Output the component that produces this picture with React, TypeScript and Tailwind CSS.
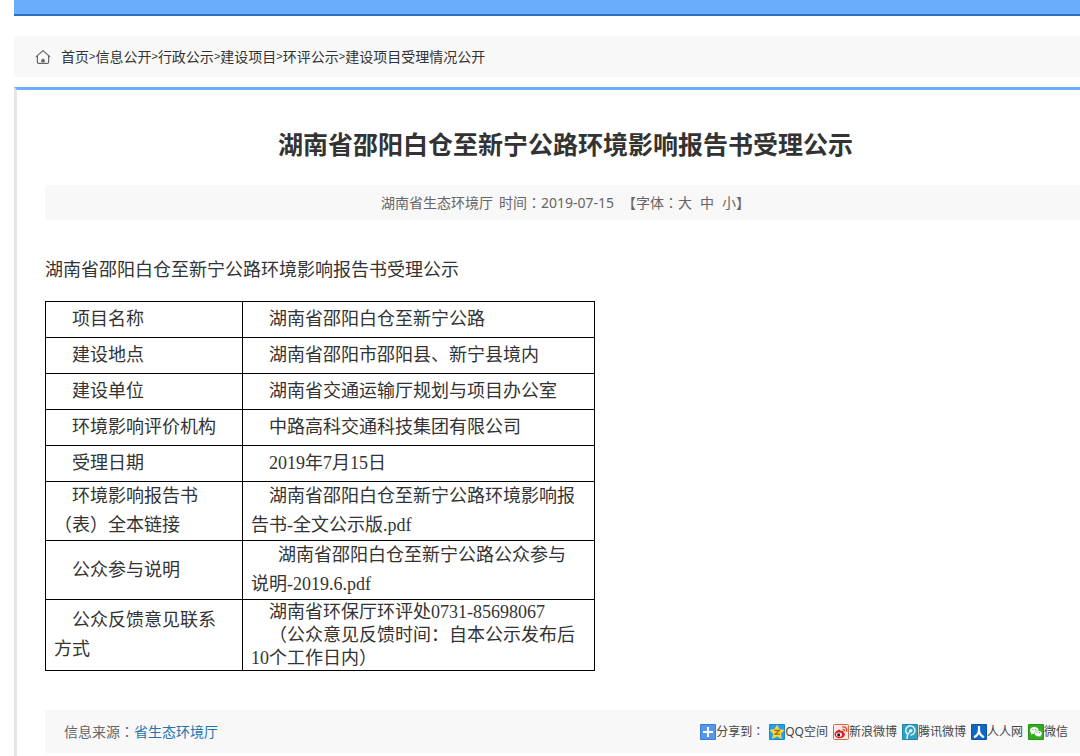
import React from "react";

const crumbs = [
  { title: "首页", href: "#home" },
  { title: "信息公开", href: "#info" },
  { title: "行政公示", href: "#notice" },
  { title: "建设项目", href: "#projects" },
  { title: "环评公示", href: "#eia" },
  { title: "建设项目受理情况公开", href: "#accepted" },
];

const rows = [
  { label: "项目名称", value: "湖南省邵阳白仓至新宁公路" },
  { label: "建设地点", value: "湖南省邵阳市邵阳县、新宁县境内" },
  { label: "建设单位", value: "湖南省交通运输厅规划与项目办公室" },
  { label: "环境影响评价机构", value: "中路高科交通科技集团有限公司" },
  { label: "受理日期", value: "2019年7月15日" },
];

const HomeIcon = () => (
  <svg viewBox="0 0 16 16" className="h-4 w-4" fill="none" stroke="#666" strokeWidth="1.2">
    <path d="M1.2 7.6 8 1.6l6.8 6" strokeLinecap="round" strokeLinejoin="round" />
    <path d="M2.4 6.8v6.4c0 .7.4 1.1 1.1 1.1h9c.7 0 1.1-.4 1.1-1.1V6.8" />
    <path d="M6.5 13v-1.600a1.500 1.500 0 0 1 3 0V13z" fill="#666" strokeWidth=".6" />
  </svg>
);

const ShareIcon = () => (
  <svg viewBox="0 0 16 16" className="h-4 w-4">
    <rect width="16" height="16" rx="1" fill="#3a7fd5" />
    <rect x="1" y="1" width="14" height="14" fill="#5598ea" />
    <path d="M8 3v10M3 8h10" stroke="#fff" strokeWidth="2" />
  </svg>
);

const QzoneIcon = () => (
  <svg viewBox="0 0 16 16" className="h-4 w-4">
    <rect width="16" height="16" rx="1" fill="#1686d9" />
    <rect x="1" y="1" width="14" height="14" fill="#23a0ee" />
    <path
      d="m8 .6 2.400 4.500 5.200.8-3.700 3.800 1 5.200L8 12.500l-4.900 2.400 1-5.200L.4 5.900l5.200-.8z"
      fill="#fdd835"
    />
    <path d="M5.300 6.300h5.200L6 10.200h5" fill="none" stroke="#a56a10" strokeWidth="1.2" />
  </svg>
);

const SinaIcon = () => (
  <svg viewBox="0 0 16 16" className="h-4 w-4">
    <rect x=".5" y=".5" width="15" height="15" rx="1" fill="#f8e9e4" stroke="#d9694c" />
    <path
      d="M1.500 10.300c0-2.300 3.300-5 5.200-4.600.9.200.9 1 .7 1.500 1.500-.7 3.500-.5 3 1.200 3.200 1.200 1.300 5.800-3.900 5.800-2.800 0-5-1.500-5-3.900z"
      fill="#d8232a"
    />
    <ellipse cx="6" cy="10.700" rx="2.900" ry="2.100" fill="#fff" />
    <circle cx="5.700" cy="10.900" r="1.600" fill="#222" />
    <path d="M9.200 3c3.400-.5 5.200 1.700 4.400 4.700M9.500 5.400c1.500-.2 2.300.7 2 2" fill="none" stroke="#e0482a" strokeWidth="1.4" />
  </svg>
);

const TencentIcon = () => (
  <svg viewBox="0 0 16 16" className="h-4 w-4">
    <rect width="16" height="16" rx="1" fill="#1b86ab" />
    <rect x="1" y="1" width="14" height="14" fill="#329fc3" />
    <path
      d="M4.800 9.400A4.600 4.600 0 1 1 9.200 11M5 14.500c.2-3.300 1-5.700 3.500-7.500"
      fill="none"
      stroke="#e5f6fb"
      strokeWidth="1.5"
      strokeLinecap="round"
    />
    <circle cx="8.800" cy="6.700" r="1.700" fill="#e5f6fb" />
  </svg>
);

const RenrenIcon = () => (
  <svg viewBox="0 0 16 16" className="h-4 w-4">
    <rect width="16" height="16" rx="1" fill="#0a55a5" />
    <rect x="1" y="1" width="14" height="14" fill="#1068c4" />
    <path d="M8 2v3.500c0 3.400-1.700 6-4.900 7.800M8 5.500c0 3.400 1.700 6 4.900 7.800" fill="none" stroke="#fff" strokeWidth="2.2" />
  </svg>
);

const WechatIcon = () => (
  <svg viewBox="0 0 16 16" className="h-4 w-4">
    <rect width="16" height="16" rx="1" fill="#259417" />
    <rect x="1" y="1" width="14" height="14" fill="#36aa22" />
    <path d="M6.300 3C3.800 3 2 4.500 2 6.500c0 1.100.6 2 1.500 2.700L3 10.700l1.800-.9c2.800.7 5.800-.7 5.800-3.300C10.600 4.500 8.800 3 6.300 3z" fill="#fff" />
    <path d="M10.300 6.500c-2.200 0-3.900 1.300-3.900 3.100 0 2.200 2.600 3.500 5 2.900l1.500.8-.4-1.300c.8-.6 1.500-1.400 1.500-2.400 0-1.800-1.600-3.100-3.700-3.100z" fill="#fff" stroke="#36aa22" strokeWidth=".5" />
    <path d="M4.300 5.600h1M7 5.600h1M8.500 8.800h1M11 8.800h1" stroke="#36aa22" strokeWidth="1" />
  </svg>
);

const shares = [
  { title: "QQ空间", icon: QzoneIcon },
  { title: "新浪微博", icon: SinaIcon },
  { title: "腾讯微博", icon: TencentIcon },
  { title: "人人网", icon: RenrenIcon },
  { title: "微信", icon: WechatIcon },
];

// full-width colon centred in its cell
const Colon = () => (
  <span lang="zh-TW" className="font-['Noto_Sans_CJK_TC',sans-serif]">：</span>
);

const App: React.FC = () => {
  return (
    <div
      lang="zh-CN"
      className="flex min-h-screen flex-col bg-white pl-[14px] font-['Noto_Sans','Noto_Sans_CJK_SC',sans-serif] text-sm text-[#333]"
    >
      <div className="h-4 border-b-2 border-[#2f6fc0] bg-[#6aadfd]" />

      {/* Breadcrumb */}
      <nav className="mt-5 flex h-[41px] items-center bg-[#f8f8f8] pl-[21px]">
        <HomeIcon />
        <div className="ml-[10px] flex items-center">
          {crumbs.map((c, i) => (
            <React.Fragment key={c.href}>
              {i > 0 && <span className="font-['Liberation_Sans',sans-serif] text-[11px]">&gt;</span>}
              <a href={c.href}>{c.title}</a>
            </React.Fragment>
          ))}
        </div>
      </nav>

      <main className="mt-[10px] grow border-t-3 border-l-3 border-t-[#6aadfd] border-l-[#e5e5e5] pl-7">
        <h1 className="pt-[35px] pl-1.5 text-center text-[25px] leading-[38px] font-bold">
          湖南省邵阳白仓至新宁公路环境影响报告书受理公示
        </h1>

        <div className="mt-[22px] flex h-[35px] items-center justify-center bg-[#f8f8f8] pl-1.5 text-[#666]">
          <span>湖南省生态环境厅</span>
          <span className="ml-1.5">时间<Colon />2019-07-15</span>
          <span className="ml-2">【字体<Colon /></span>
          <button type="button">大</button>
          <button type="button" className="ml-2">中</button>
          <button type="button" className="ml-2">小</button>
          <span>】</span>
        </div>

        {/* Article body */}
        <article className="pt-9 font-['Liberation_Serif','Noto_Sans_CJK_SC',serif] text-lg leading-[29px]">
          <p>湖南省邵阳白仓至新宁公路环境影响报告书受理公示</p>

          <table className="mt-4 w-[550px] table-fixed border-collapse border border-black [&_td]:border [&_td]:border-black [&_td]:py-0 [&_td]:pr-[14px] [&_td]:pl-2 [&_th]:border [&_th]:border-black [&_th]:py-0 [&_th]:pr-[14px] [&_th]:pl-2 [&_th]:text-left [&_th]:font-normal">
            <colgroup>
              <col className="w-[197px]" />
              <col />
            </colgroup>
            <tbody>
              {rows.map((r) => (
                <tr key={r.label} className="h-9">
                  <th scope="row" className="indent-[18px]">{r.label}</th>
                  <td className="indent-[18px]">{r.value}</td>
                </tr>
              ))}
              <tr>
                <th scope="row" className="indent-[18px]">环境影响报告书（表）全本链接</th>
                <td className="indent-[18px]">
                  <a href="#report">湖南省邵阳白仓至新宁公路环境影响报告书-全文公示版.pdf</a>
                </td>
              </tr>
              <tr>
                <th scope="row" className="indent-[18px]">公众参与说明</th>
                <td className="indent-[27px]">
                  <a href="#participation">湖南省邵阳白仓至新宁公路公众参与说明-2019.6.pdf</a>
                </td>
              </tr>
              <tr className="h-[71px]">
                <th scope="row" className="indent-[18px]">公众反馈意见联系方式</th>
                <td className="indent-[18px] leading-[23px]">
                  <p>湖南省环保厅环评处0731-85698067</p>
                  <p>（公众意见反馈时间：自本公示发布后10个工作日内）</p>
                </td>
              </tr>
            </tbody>
          </table>
        </article>

        {/* Source + share */}
        <footer className="mt-[39px] mb-[3px] flex h-[43px] items-center justify-between bg-[#f8f8f8] pr-3 pl-[19px] text-[#666]">
          <div>
            信息来源<Colon />
            <a href="#source" className="text-[#1f74ad]">省生态环境厅</a>
          </div>
          <div className="flex items-center gap-[5px] text-xs text-[#444]">
            <div className="flex items-center">
              <ShareIcon />
              <span>分享到<Colon /></span>
            </div>
            {shares.map((s) => (
              <a key={s.title} href="#share" className="flex items-center">
                <s.icon />
                <span>{s.title}</span>
              </a>
            ))}
          </div>
        </footer>
      </main>
    </div>
  );
};

export default App;
